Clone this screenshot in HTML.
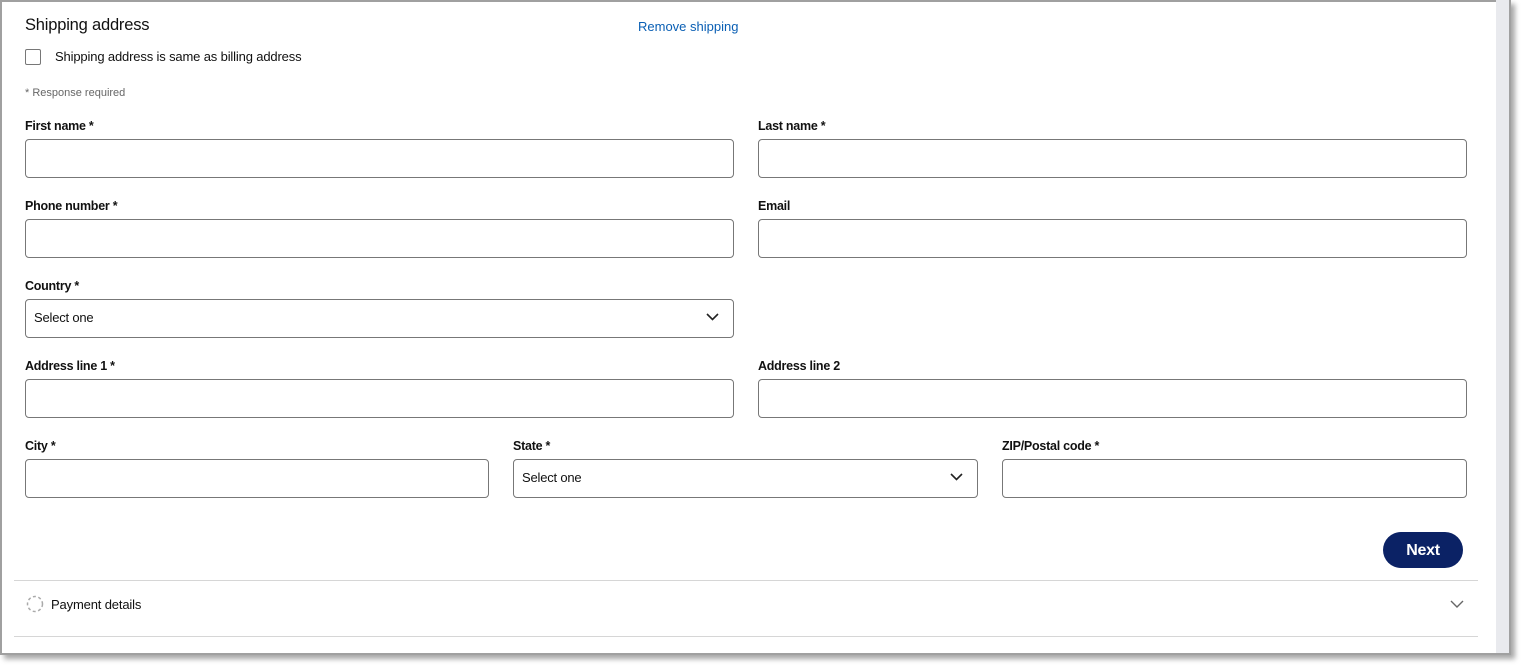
<!DOCTYPE html>
<html><head><style>
*{box-sizing:border-box;margin:0;padding:0}
body{width:1522px;height:667px;background:#fff;font-family:"Liberation Sans",Arial,sans-serif;position:relative;overflow:hidden;color:#111}
.frame{position:absolute;left:0;top:0;width:1511px;height:655px;border:2px solid #a0a0a0;background:#fff;box-shadow:4px 4px 5px rgba(0,0,0,.35)}
.sb{position:absolute;left:1496px;top:0;width:13px;height:653px;background:#e9eaee}
.a{position:absolute}
.lbl{position:absolute;font-size:12.5px;font-weight:bold;color:#111;letter-spacing:-0.25px;top:0}
.in{position:absolute;height:39px;border:1px solid #777;border-radius:4px;background:#fff}
.sel{font-size:13px;padding:10px 8px;color:#111;letter-spacing:-0.2px}
.chev{position:absolute;right:14px;top:13px}
.hr{position:absolute;left:14px;width:1464px;height:1px;background:#d6d6d6}
</style></head><body>
<div class="frame"></div>
<div class="sb"></div>
<div class="a" style="left:25px;top:16px;font-size:16.5px;color:#111;letter-spacing:-0.2px">Shipping address</div>
<div class="a" style="left:638px;top:19px;font-size:13px;color:#0a5fb4">Remove shipping</div>
<div class="a" style="left:25px;top:49px;width:16px;height:16px;border:1px solid #777;border-radius:2px"></div>
<div class="a" style="left:55px;top:49px;font-size:13px;letter-spacing:-0.15px">Shipping address is same as billing address</div>
<div class="a" style="left:25px;top:87px;font-size:11px;color:#666">* Response required</div>

<div class="lbl" style="left:25px;top:119px">First name *</div>
<div class="lbl" style="left:758px;top:119px">Last name *</div>
<div class="in" style="left:25px;top:139px;width:709px"></div>
<div class="in" style="left:758px;top:139px;width:709px"></div>

<div class="lbl" style="left:25px;top:199px">Phone number *</div>
<div class="lbl" style="left:758px;top:199px">Email</div>
<div class="in" style="left:25px;top:219px;width:709px"></div>
<div class="in" style="left:758px;top:219px;width:709px"></div>

<div class="lbl" style="left:25px;top:279px">Country *</div>
<div class="in sel" style="left:25px;top:299px;width:709px">Select one<svg class="chev" width="13" height="8" viewBox="0 0 13 8"><path d="M1 1l5.5 5.5L12 1" fill="none" stroke="#222" stroke-width="1.6"/></svg></div>

<div class="lbl" style="left:25px;top:359px">Address line 1 *</div>
<div class="lbl" style="left:758px;top:359px">Address line 2</div>
<div class="in" style="left:25px;top:379px;width:709px"></div>
<div class="in" style="left:758px;top:379px;width:709px"></div>

<div class="lbl" style="left:25px;top:439px">City *</div>
<div class="lbl" style="left:513px;top:439px">State *</div>
<div class="lbl" style="left:1002px;top:439px">ZIP/Postal code *</div>
<div class="in" style="left:25px;top:459px;width:464px"></div>
<div class="in sel" style="left:513px;top:459px;width:465px">Select one<svg class="chev" width="13" height="8" viewBox="0 0 13 8"><path d="M1 1l5.5 5.5L12 1" fill="none" stroke="#222" stroke-width="1.6"/></svg></div>
<div class="in" style="left:1002px;top:459px;width:465px"></div>

<div class="a" style="left:1383px;top:532px;width:80px;height:36px;border-radius:18px;background:#0b2265;color:#fff;font-weight:bold;font-size:16px;text-align:center;line-height:37px;letter-spacing:-0.3px">Next</div>

<div class="hr" style="top:580px"></div>
<svg class="a" style="left:26px;top:595px" width="18" height="18" viewBox="0 0 18 18"><circle cx="9" cy="9" r="7.5" fill="none" stroke="#aaa" stroke-width="1.5" stroke-dasharray="3 2.5"/></svg>
<div class="a" style="left:51px;top:597px;font-size:13px;letter-spacing:-0.15px">Payment details</div>
<svg class="a" style="left:1450px;top:600px" width="14" height="8" viewBox="0 0 14 8"><path d="M1 1l6 6 6-6" fill="none" stroke="#666" stroke-width="1.4"/></svg>
<div class="hr" style="top:636px"></div>
</body></html>
